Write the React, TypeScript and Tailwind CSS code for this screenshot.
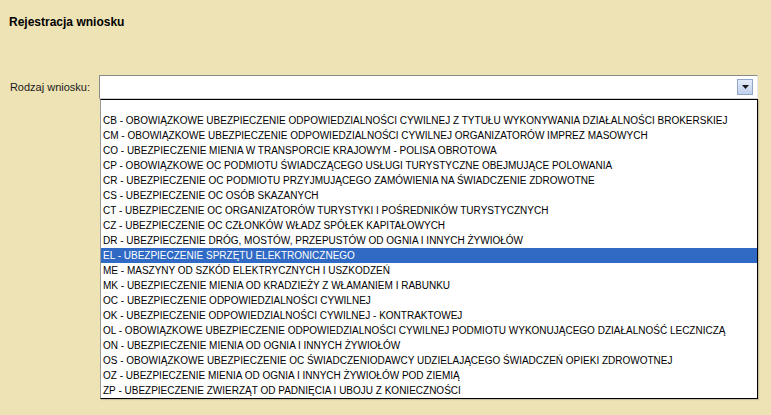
const items = [
  'CB - OBOWIĄZKOWE UBEZPIECZENIE ODPOWIEDZIALNOŚCI CYWILNEJ Z TYTUŁU WYKONYWANIA DZIAŁALNOŚCI BROKERSKIEJ',
  'CM - OBOWIĄZKOWE UBEZPIECZENIE ODPOWIEDZIALNOŚCI CYWILNEJ ORGANIZATORÓW IMPREZ MASOWYCH',
  'CO - UBEZPIECZENIE MIENIA W TRANSPORCIE KRAJOWYM - POLISA OBROTOWA',
  'CP - OBOWIĄZKOWE OC PODMIOTU ŚWIADCZĄCEGO USŁUGI TURYSTYCZNE OBEJMUJĄCE POLOWANIA',
  'CR - UBEZPIECZENIE OC PODMIOTU PRZYJMUJĄCEGO ZAMÓWIENIA NA ŚWIADCZENIE ZDROWOTNE',
  'CS - UBEZPIECZENIE OC OSÓB SKAZANYCH',
  'CT - UBEZPIECZENIE OC ORGANIZATORÓW TURYSTYKI I POŚREDNIKÓW TURYSTYCZNYCH',
  'CZ - UBEZPIECZENIE OC CZŁONKÓW WŁADZ SPÓŁEK KAPITAŁOWYCH',
  'DR - UBEZPIECZENIE DRÓG, MOSTÓW, PRZEPUSTÓW OD OGNIA I INNYCH ŻYWIOŁÓW',
  'EL - UBEZPIECZENIE SPRZĘTU ELEKTRONICZNEGO',
  'ME - MASZYNY OD SZKÓD ELEKTRYCZNYCH I USZKODZEŃ',
  'MK - UBEZPIECZENIE MIENIA OD KRADZIEŻY Z WŁAMANIEM I RABUNKU',
  'OC - UBEZPIECZENIE ODPOWIEDZIALNOŚCI CYWILNEJ',
  'OK - UBEZPIECZENIE ODPOWIEDZIALNOŚCI CYWILNEJ - KONTRAKTOWEJ',
  'OL - OBOWIĄZKOWE UBEZPIECZENIE ODPOWIEDZIALNOŚCI CYWILNEJ PODMIOTU WYKONUJĄCEGO DZIAŁALNOŚĆ LECZNICZĄ',
  'ON - UBEZPIECZENIE MIENIA OD OGNIA I INNYCH ŻYWIOŁÓW',
  'OS - OBOWIĄZKOWE UBEZPIECZENIE OC ŚWIADCZENIODAWCY UDZIELAJĄCEGO ŚWIADCZEŃ OPIEKI ZDROWOTNEJ',
  'OZ - UBEZPIECZENIE MIENIA OD OGNIA I INNYCH ŻYWIOŁÓW POD ZIEMIĄ',
  'ZP - UBEZPIECZENIE ZWIERZĄT OD PADNIĘCIA I UBOJU Z KONIECZNOŚCI',
]

export default function App() {
  const selected = 9

  return (
    <div className="w-[771px] h-[415px] bg-[#eee3b5] text-black text-[11px] font-['Liberation_Sans',sans-serif] overflow-hidden">
      <div className="pl-[9px] pt-[15px] h-[75px]">
        <h1 className="font-bold text-[12px] leading-[15px]">Rejestracja wniosku</h1>
      </div>

      <div className="flex">
        <label className="w-[99px] shrink-0 pr-[9px] text-right leading-[24px] whitespace-nowrap text-[#1a1a1a]">
          Rodzaj wniosku:
        </label>
        <div className="w-[659px] shrink-0">
          <div className="h-[24px] bg-white border border-t-[#8a8a8a] border-l-[#8a8a8a] border-r-[#e8e8e8] border-b-[#cfcfcf] flex items-center justify-end pr-[4px]">
            <div className="w-[16px] h-[16px] border border-[#8fa6c8] bg-gradient-to-b from-[#e4ecf8] to-[#bfd0ec] flex items-center justify-center">
              <svg width="7" height="4" viewBox="0 0 7 4">
                <path d="M0 0h7L3.5 4z" fill="#1a1a1a" />
              </svg>
            </div>
          </div>

          <div className="w-[658px] ml-[1px] bg-white border border-black border-l-[#9a9a9a] shadow-[1px_1px_1px_rgba(0,0,0,0.15)] text-[10px]">
            <div className="h-[13px]" />
            {items.map((item, i) => (
              <div
                key={item}
                className={
                  i === selected
                    ? 'h-[15px] leading-[15px] pl-[2px] whitespace-nowrap bg-[#316ac5] text-white'
                    : 'h-[15px] leading-[15px] pl-[2px] whitespace-nowrap'
                }
              >
                {item}
              </div>
            ))}
          </div>
        </div>
      </div>
    </div>
  )
}
